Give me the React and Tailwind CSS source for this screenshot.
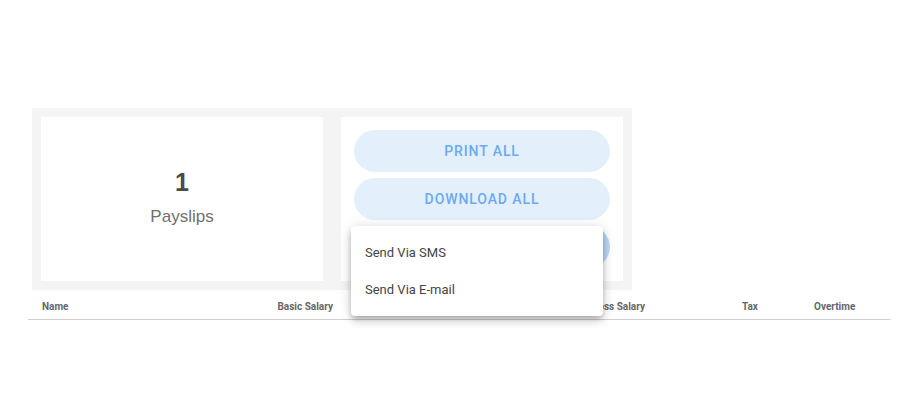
export default function App() {
  return (
    <div className="w-[911px] h-[415px] bg-white overflow-hidden" style={{ fontFamily: "Roboto, 'Liberation Sans', sans-serif" }}>
      <div className="pt-[108px] pl-[28px]">
        <div className="ml-[4px] w-[600px] h-[182px] bg-[#f4f4f4] p-[9px] flex gap-[18px]">
          <div className="w-[282px] h-[164px] bg-white flex flex-col items-center justify-center">
            <div className="text-[25px] font-bold text-[#4a4a4a] leading-none -mt-[4px]" style={{ fontFamily: "'Liberation Sans', Arial, sans-serif" }}>1</div>
            <div className="text-[17px] text-[#707070] mt-[13px] leading-none" style={{ fontFamily: "'Liberation Sans', Arial, sans-serif" }}>Payslips</div>
          </div>
          <div className="relative w-[282px] h-[164px] bg-white px-[13px] py-[13px] flex flex-col gap-[6px]">
            <div className="h-[42px] rounded-full bg-[#e3f0fc] flex items-center justify-center text-[14px] font-medium tracking-[0.9px] text-[#6ba9f3]">PRINT ALL</div>
            <div className="h-[42px] rounded-full bg-[#e3f0fc] flex items-center justify-center text-[14px] font-medium tracking-[0.9px] text-[#6ba9f3]">DOWNLOAD ALL</div>
            <div className="h-[42px] rounded-full bg-[#bcd9f5] flex items-center justify-center text-[14px] font-medium tracking-[0.9px] text-[#6ba9f3]">SEND ALL</div>
            <div className="absolute left-[10px] top-[109px] w-[252px] h-[90px] bg-white rounded-[4px] py-[8px] z-10 shadow-[0_3px_5px_-1px_rgba(0,0,0,0.2),0_5px_8px_0_rgba(0,0,0,0.14),0_1px_14px_0_rgba(0,0,0,0.12)]">
              <div className="h-[37px] flex items-center px-[14px] text-[13px] text-[#444]">Send Via SMS</div>
              <div className="h-[37px] flex items-center px-[14px] text-[13px] text-[#444]">Send Via E-mail</div>
            </div>
          </div>
        </div>
        <div className="w-[863px] h-[30px] pt-[3px] border-b border-[#d0d0d0] flex items-center text-[10px] font-bold text-[#666]">
          <div className="w-[150px] pl-[14px]">Name</div>
          <div className="w-[155px] text-right">Basic Salary</div>
          <div className="w-[156px] text-right">Allowances</div>
          <div className="w-[156px] text-right">Gross Salary</div>
          <div className="w-[97px]"></div>
          <div className="w-[72px]">Tax</div>
          <div>Overtime</div>
        </div>
      </div>
    </div>
  );
}
